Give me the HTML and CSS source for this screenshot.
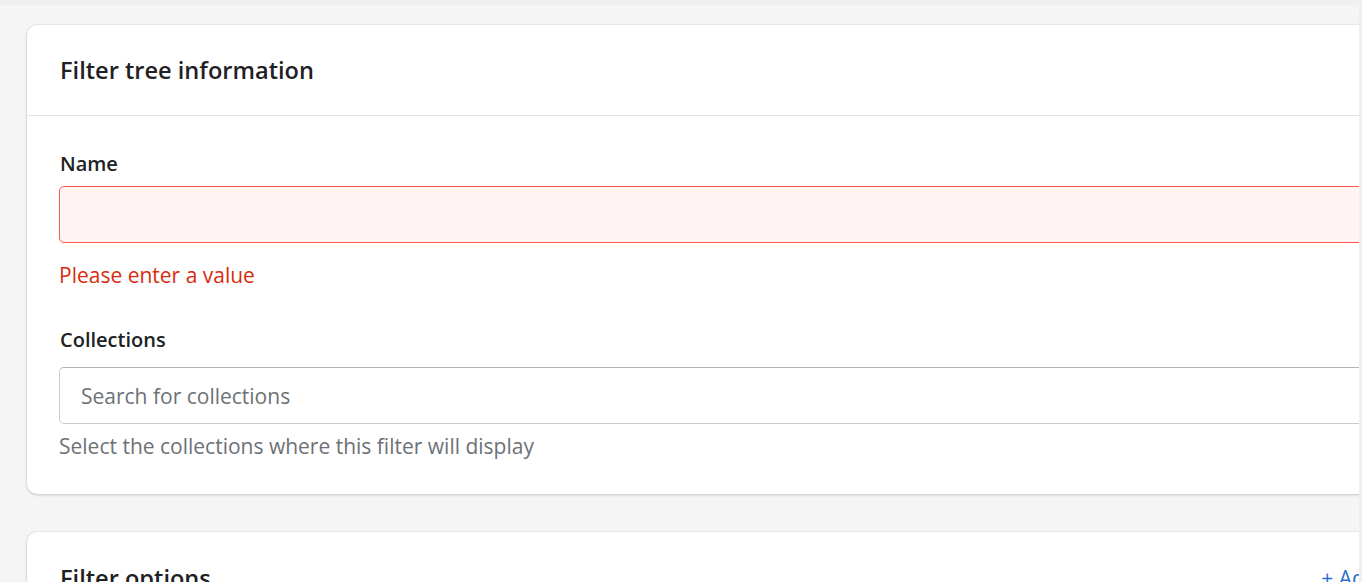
FILE: index.html
```html
<!DOCTYPE html>
<html lang="en">
<head>
<meta charset="utf-8">
<title>Filter tree</title>
<link rel="stylesheet" href="styles.css">
</head>
<body>
<div class="topbar"></div>
<div class="page">
  <main class="content">
    <section class="card">
      <header class="card-header">
        <h2 class="card-title">Filter tree information</h2>
      </header>
      <div class="card-body">
        <div class="field">
          <label class="label" for="name">Name</label>
          <input id="name" class="input input-error" type="text">
          <p class="error">Please enter a value</p>
        </div>
        <div class="field">
          <label class="label label-collections" for="coll">Collections</label>
          <input id="coll" class="input" type="text" placeholder="Search for collections">
          <p class="help">Select the collections where this filter will display</p>
        </div>
      </div>
    </section>
    <section class="card card-second">
      <header class="card-header card-header-row">
        <h2 class="card-title">Filter options</h2>
        <a class="add-link" href="#">+ Add option</a>
      </header>
    </section>
  </main>
  <div class="scroll-edge"></div>
</div>
</body>
</html>
```
FILE: styles.css
```css
* { box-sizing: border-box; }
html, body { margin: 0; padding: 0; }
body {
  background: #eff0f1;
  font-family: "Open Sans", "Noto Sans", sans-serif;
  color: #202223;
  height: 582px;
  overflow: hidden;
}
.topbar { height: 5px; background: #eff0f1; }
.page {
  display: flex;
  height: 577px;
}
.content {
  flex: 1;
  background: #f5f5f5;
  overflow: hidden;
  padding: 20px 0 0 27px;
  min-width: 0;
}
.scroll-edge { width: 3px; background: #efefef; }
.card {
  width: 1453px;
  background: #fff;
  border-radius: 10px;
  box-shadow: 0 1px 3px rgba(0,0,0,0.18), 0 0 0 1px rgba(63,63,68,0.04);
}
.card-header {
  height: 91px;
  border-bottom: 1px solid #e1e3e5;
  display: flex;
  align-items: center;
  padding: 0 33px;
}
.card-title {
  margin: 0;
  font-size: 23.6px;
  line-height: 32px;
  font-weight: 600;
  color: #1f2124;
}
.card-body { padding: 34px 0 34px 32px; }
.field { display: flex; flex-direction: column; }
.label {
  font-size: 20px;
  font-weight: 600;
  line-height: 28px;
  margin-bottom: 8px;
  padding-left: 1px;
}
.label-collections { margin-bottom: 13px; }
.input {
  height: 57px;
  border: 1px solid #c9cccf;
  border-top-color: #aeb4b9;
  border-radius: 5px;
  font: inherit;
  font-size: 21px;
  padding: 0 21px;
  color: #202223;
  background: #fff;
}
.input::placeholder { color: #6d7175; }
.input-error {
  border-color: #fd5749;
  background: #fff4f4;
}
.error {
  margin: 18px 0 37px;
  font-size: 21px;
  line-height: 28px;
  color: #d82c0d;
}
.help {
  margin: 8px 0 0;
  font-size: 21px;
  line-height: 28px;
  color: #6d7175;
}
.card-second { margin-top: 38px; }
.card-header-row {
  justify-content: space-between;
  border-bottom: none;
}
.add-link {
  color: #2c6ecb;
  text-decoration: none;
  font-size: 21px;
  line-height: 28px;
}
```
